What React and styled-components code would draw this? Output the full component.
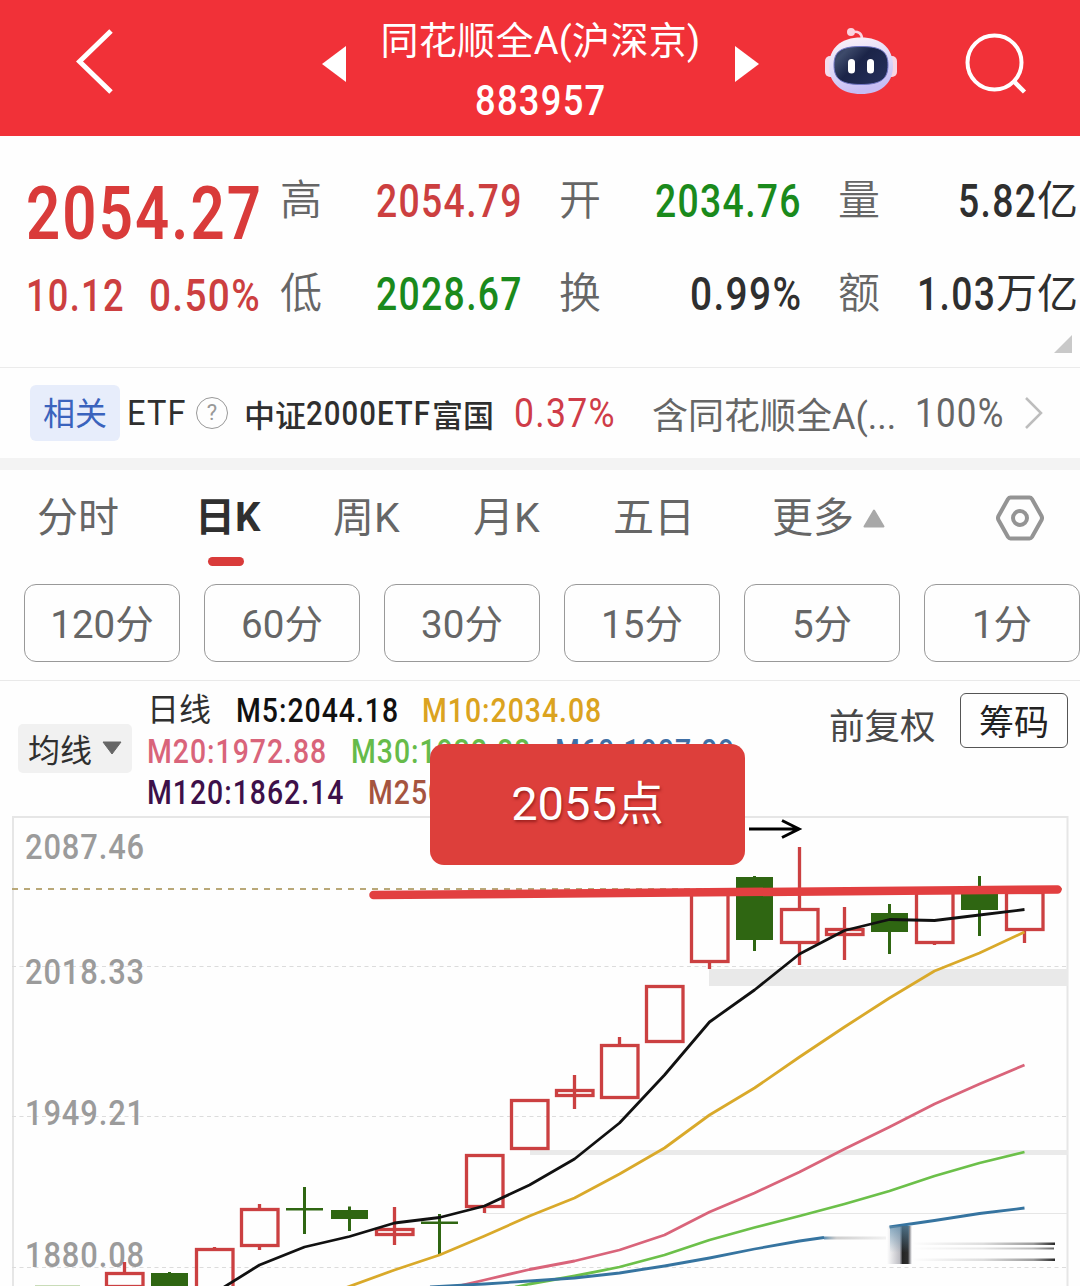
import React from 'react';
import styled, { createGlobalStyle } from 'styled-components';

const RED = '#d93b3a';
const GREEN = '#1a8a1c';
const DARK = '#2f2f2f';
const GREY = '#666';

const stats = [
    { label: '高', value: '2054.79', color: '#cc3f40', width: 145 },
    { label: '开', value: '2034.76', color: GREEN, width: 145 },
    { label: '量', value: '5.82', unit: '亿', color: DARK, width: 79 },
    { label: '低', value: '2028.67', color: GREEN, width: 145 },
    { label: '换', value: '0.99%', color: DARK, width: 110 },
    { label: '额', value: '1.03', unit: '万亿', color: DARK, width: 79 },
];

const periods = ['120分', '60分', '30分', '15分', '5分', '1分'];

const legend = [
    [
        { text: 'M5:2044.18', color: '#111', width: 162 },
        { text: 'M10:2034.08', color: '#dba320', width: 180 },
    ],
    [
        { text: 'M20:1972.88', color: '#d9647a', width: 180 },
        { text: 'M30:1932.88', color: '#66bb4a', width: 180 },
        { text: 'M60:1907.09', color: '#3f6fa5', width: 180 },
    ],
    [
        { text: 'M120:1862.14', color: '#3d1049', width: 197 },
        { text: 'M250', color: '#a5543f', width: 80 },
    ],
];

// x is the middle of the candle, top/bottom the body, high/low the wick
const candles = [
    { x: 124.5, top: 1272, bottom: 1288, high: 1262, low: 1288, up: true },
    { x: 169.5, top: 1273, bottom: 1292, high: 1272, low: 1292 },
    { x: 214.5, top: 1248, bottom: 1296, high: 1247, low: 1296, up: true },
    { x: 259.5, top: 1208, bottom: 1247, high: 1204, low: 1250, up: true },
    { x: 304.5, top: 1208, bottom: 1210.5, high: 1187, low: 1234 },
    { x: 349.5, top: 1210, bottom: 1219, high: 1206.5, low: 1231 },
    { x: 394.5, top: 1228, bottom: 1236, high: 1207, low: 1245, up: true },
    { x: 439.5, top: 1221.5, bottom: 1224, high: 1214, low: 1254 },
    { x: 484.5, top: 1154, bottom: 1208, high: 1154, low: 1213, up: true },
    { x: 529.5, top: 1099, bottom: 1150, high: 1099, low: 1150, up: true },
    { x: 574.5, top: 1089, bottom: 1097, high: 1075, low: 1109, up: true },
    { x: 619.5, top: 1044, bottom: 1099, high: 1037, low: 1099, up: true },
    { x: 664.5, top: 985, bottom: 1043, high: 985, low: 1043, up: true },
    { x: 709.5, top: 892, bottom: 963, high: 892, low: 969, up: true },
    { x: 754.5, top: 877, bottom: 940, high: 876, low: 951 },
    { x: 799.5, top: 908, bottom: 944, high: 847, low: 965, up: true },
    { x: 844.5, top: 928, bottom: 936, high: 907, low: 960, up: true },
    { x: 889.5, top: 913, bottom: 932, high: 904, low: 954 },
    { x: 934.5, top: 891, bottom: 944, high: 891, low: 945, up: true },
    { x: 979.5, top: 891, bottom: 910, high: 876, low: 936 },
    { x: 1024.5, top: 891, bottom: 931, high: 891, low: 943, up: true },
];

const averages = [
    {
        color: '#d9647a',
        points: '450,1288 484.5,1280 529.5,1269.5 574.5,1261 619.5,1250 664.5,1235 709.5,1212 754.5,1193 799.5,1172 844.5,1149 889.5,1127 934.5,1104 979.5,1084 1024.5,1065',
    },
    {
        color: '#6cc04a',
        points: '515,1287 529.5,1284 574.5,1276 619.5,1267 664.5,1255 709.5,1240 754.5,1227.5 799.5,1216 844.5,1204 889.5,1191 934.5,1176 979.5,1163 1024.5,1152',
    },
    {
        color: '#3674a0',
        points: '430,1287 484.5,1284 529.5,1281 574.5,1278 619.5,1273 664.5,1266 709.5,1258 754.5,1249 799.5,1241 824,1237.5',
    },
    { color: '#3674a0', points: '889.5,1227 934.5,1220.5 979.5,1213.5 1024.5,1208' },
    {
        color: '#d9a92a',
        points: '345,1288 394.5,1270 439.5,1255 484.5,1236 529.5,1216 574.5,1198 619.5,1174 664.5,1148 709.5,1115 754.5,1088 799.5,1057 844.5,1027 889.5,998 934.5,971 979.5,953 1024.5,932',
    },
    {
        color: '#111',
        points: '214.5,1293 259.5,1265 304.5,1247 349.5,1236.5 394.5,1223 439.5,1217.5 484.5,1206 529.5,1185 574.5,1159 619.5,1123 664.5,1075 709.5,1022 754.5,990 799.5,954 844.5,930.5 889.5,919.5 934.5,920.5 979.5,915 1024.5,909.5',
    },
];

const axis = [
    { text: '2087.46', x: 25, y: 859, width: 120 },
    { text: '2018.33', x: 25, y: 984, width: 120 },
    { text: '1949.21', x: 25, y: 1125, width: 120 },
    { text: '1880.08', x: 25, y: 1267, width: 120 },
];

function Candle({ x, top, bottom, high, low, up }) {
    if (!up) {
        return (
            <g fill='#2f6612'>
                <rect x={x - 1.5} y={high} width='3' height={low - high} />
                <rect x={x - 18.5} y={top} width='37' height={bottom - top} />
            </g>
        );
    }
    return (
        <g stroke='#cb4041' strokeWidth='3.300' fill='none'>
            <path d={`M${x} ${high}V${top + 1}M${x} ${bottom - 1}V${low}`} />
            {bottom - top < 12 && <path d={`M${x} ${top}V${bottom}`} />}
            <rect x={x - 18} y={top + 1.5} width='36.5' height={bottom - top - 3} />
        </g>
    );
}

function Robot() {
    return (
        <svg width='72' height='68' viewBox='825 27 72 68'>
            <defs>
                <linearGradient id='shell' x1='0' y1='0' x2='0.3' y2='1'>
                    <stop offset='0' stopColor='#fff4f7' />
                    <stop offset='0.55' stopColor='#e0daf8' />
                    <stop offset='1' stopColor='#c6bdf4' />
                </linearGradient>
                <linearGradient id='visor' x1='0' y1='0' x2='1' y2='0.7'>
                    <stop offset='0' stopColor='#273257' />
                    <stop offset='0.2' stopColor='#3e4b6b' />
                    <stop offset='0.5' stopColor='#1b2448' />
                    <stop offset='1' stopColor='#242e58' />
                </linearGradient>
            </defs>
            <path d='M852 32C858 31 862 33 862 39' fill='none' stroke='#fbd3df' strokeWidth='2.6' />
            <circle cx='851' cy='32' r='4' fill='#fbd3df' />
            <rect x='825' y='56' width='13' height='21' rx='5' fill='#f5dcec' />
            <rect x='884' y='56' width='13' height='21' rx='5' fill='#f8d5e3' />
            <path d='M861 37.500C881 37.500 893 48 893 66C893 84 880 94 861 94C842 94 829 84 829 66C829 48 841 37.500 861 37.500Z' fill='url(#shell)' />
            <path d='M861 46.500C882 46.500 888 52 888 65C888 79 881 84.500 861 84.500C841 84.500 834 79 834 65C834 52 840 46.500 861 46.500Z' fill='url(#visor)' stroke='#7277c6' strokeWidth='1' />
            <rect x='848' y='59' width='7' height='14.500' rx='3.500' fill='#fff' />
            <rect x='867' y='59' width='7' height='14.500' rx='3.500' fill='#fff' />
        </svg>
    );
}

function Chart() {
    return (
        <ChartSvg viewBox='0 816 1080 470'>
            <defs>
                <linearGradient id='streak' x1='0' x2='1' y1='0' y2='0'>
                    <stop offset='0' stopColor='#222' stopOpacity='0' />
                    <stop offset='0.5' stopColor='#222' stopOpacity='0.15' />
                    <stop offset='0.85' stopColor='#222' stopOpacity='0.45' />
                    <stop offset='1' stopColor='#111' stopOpacity='0.9' />
                </linearGradient>
                <linearGradient id='tail' x1='0' x2='1' y1='0' y2='0'>
                    <stop offset='0' stopColor='#3674a0' stopOpacity='0.8' />
                    <stop offset='0.2' stopColor='#888' stopOpacity='0.4' />
                    <stop offset='1' stopColor='#888' stopOpacity='0.1' />
                </linearGradient>
                <linearGradient id='block' x1='0' x2='1' y1='0' y2='0'>
                    <stop offset='0' stopColor='#445' stopOpacity='0' />
                    <stop offset='0.5' stopColor='#445' stopOpacity='0.35' />
                    <stop offset='0.62' stopColor='#181818' stopOpacity='0.95' />
                    <stop offset='0.84' stopColor='#181818' stopOpacity='0.9' />
                    <stop offset='1' stopColor='#445' stopOpacity='0' />
                </linearGradient>
                <linearGradient id='blockTop' x1='0' x2='0' y1='0' y2='1'>
                    <stop offset='0' stopColor='#5b8cac' stopOpacity='0.7' />
                    <stop offset='0.7' stopColor='#5b8cac' stopOpacity='0' />
                </linearGradient>
            </defs>
            <path d='M13 1286V817H1067.500V1286' fill='none' stroke='#e6e6e6' strokeWidth='2' />
            <path d='M12 966.500H1068M12 1116.500H1068M12 1267.500H1068' stroke='#dcdcdc' strokeWidth='1' strokeDasharray='4 3.500' />
            <path d='M484 1213.500H1068' stroke='#e6e6e6' strokeWidth='1' />
            <rect x='709' y='969' width='359' height='17' fill='#e9e9e9' />
            <rect x='530' y='1150' width='538' height='5' fill='#eaeaea' />
            <path d='M12 889H1067' stroke='#b9a878' strokeWidth='2' strokeDasharray='6 6' />
            {axis.map((a) => (
                <AxisText key={a.text} x={a.x} y={a.y} textLength={a.width} lengthAdjust='spacingAndGlyphs'>
                    {a.text}
                </AxisText>
            ))}
            {candles.map((c) => (
                <Candle key={c.x} {...c} />
            ))}
            <path d='M35 1285.500H80' stroke='#c9dcb8' strokeWidth='1' />
            {averages.map((m) => (
                <polyline key={m.points} points={m.points} fill='none' stroke={m.color} strokeWidth='2.800' strokeLinejoin='round' />
            ))}
            <rect x='824' y='1236.500' width='62' height='3' fill='url(#tail)' />
            <rect x='887' y='1226' width='25' height='38' fill='url(#block)' />
            <rect x='890' y='1226' width='19' height='38' fill='url(#blockTop)' />
            <rect x='912' y='1242.500' width='143' height='2.500' fill='url(#streak)' />
            <rect x='912' y='1247.500' width='142' height='2' fill='url(#streak)' opacity='0.7' />
            <rect x='912' y='1258.500' width='143' height='2.500' fill='url(#streak)' />
            <path d='M373.500 895L1057.500 889.500' stroke='#e23f40' strokeWidth='8.500' strokeLinecap='round' />
            <path d='M749 829H799M782 820.500L799 829L782 837.500' fill='none' stroke='#000' strokeWidth='3' />
        </ChartSvg>
    );
}

function App() {
    return (
        <Page>
            <GlobalStyle />
            <Header>
                <Back>
                    <svg width='38' height='68' viewBox='76 28 38 68'>
                        <path d='M111 31L79.500 61.500L111 92' fill='none' stroke='#fff' strokeWidth='5' />
                    </svg>
                </Back>
                <TitleGroup>
                    <svg width='24' height='36' viewBox='0 0 24 36'>
                        <path d='M0 18L24 0V36Z' fill='#fff' />
                    </svg>
                    <Title>
                        <Name>同花顺全A(沪深京)</Name>
                        <Code>
                            <Num $size={42} $width={131} $k={0.865} $weight={500}>883957</Num>
                        </Code>
                    </Title>
                    <svg width='24' height='36' viewBox='0 0 24 36'>
                        <path d='M24 18L0 0V36Z' fill='#fff' />
                    </svg>
                </TitleGroup>
                <Tools>
                    <Robot />
                    <svg width='62' height='62' viewBox='965 33 62 62'>
                        <circle cx='994.500' cy='62.500' r='27' fill='none' stroke='#fff' strokeWidth='4' />
                        <path d='M1013.500 81L1024.500 92' stroke='#fff' strokeWidth='4.500' />
                    </svg>
                </Tools>
            </Header>

            <Quote>
                <Price>
                    <Num $size={74} $width={232} $k={0.81} $weight={600}>2054.27</Num>
                    <Change>
                        <Num $size={45} $width={99} $k={0.805} $weight={500}>10.12</Num>
                        <Num $size={45} $width={110} $k={0.86} $weight={500}>0.50%</Num>
                    </Change>
                </Price>
                <Stats>
                    {stats.map((s) => (
                        <Stat key={s.label} $color={s.color}>
                            <label>{s.label}</label>
                            <Num $size={46} $width={s.width} $k={s.value.includes('%') ? 0.845 : 0.812} $weight={500}>{s.value}</Num>
                            {s.unit && <Unit>{s.unit}</Unit>}
                        </Stat>
                    ))}
                </Stats>
                <Corner />
            </Quote>

            <Related>
                <Chip>相关</Chip>
                <Etf>
                    <Num $size={35} $width={60} $k={0.93}>ETF</Num>
                </Etf>
                <Help>?</Help>
                <Fund>
                    中证
                    <Num $size={33} $width={126} $k={0.89} $weight={500}>2000ETF</Num>
                    富国
                </Fund>
                <Rise>
                    <Num $size={40} $width={102} $k={0.89}>0.37%</Num>
                </Rise>
                <Holding>含同花顺全A(...</Holding>
                <Num $size={40} $width={90} $k={0.875}>100%</Num>
                <svg width='20' height='34' viewBox='0 0 20 34'>
                    <path d='M2 2L17 17L2 32' fill='none' stroke='#bdbdbd' strokeWidth='2.500' />
                </svg>
            </Related>

            <Tabs>
                <Tab>分时</Tab>
                <Tab $active>日K</Tab>
                <Tab>周K</Tab>
                <Tab>月K</Tab>
                <Tab>五日</Tab>
                <Tab>
                    更多
                    <svg width='22' height='19' viewBox='0 0 22 19'>
                        <path d='M11 1.500L20.500 17.500H1.500Z' fill='#a8a8a8' stroke='#a8a8a8' strokeWidth='2' strokeLinejoin='round' />
                    </svg>
                </Tab>
                <svg width='48' height='46' viewBox='0 0 48 46'>
                    <path d='M14.500 2.500H33.500Q35 2.500 36 4L45.500 21Q46.500 23 45.500 25L36 42Q35 43.500 33.500 43.500H14.500Q13 43.500 12 42L2.500 25Q1.500 23 2.500 21L12 4Q13 2.500 14.500 2.500Z' fill='none' stroke='#949494' strokeWidth='4' />
                    <circle cx='24' cy='23' r='7' fill='none' stroke='#949494' strokeWidth='4' />
                </svg>
            </Tabs>

            <Periods>
                {periods.map((p) => (
                    <Period key={p}>{p}</Period>
                ))}
            </Periods>

            <ChartArea>
                <ChartHead>
                    <MaSelect>
                        均线
                        <svg width='20' height='14' viewBox='0 0 20 14'>
                            <path d='M1 1H19L10 13Z' fill='#666' stroke='#666' strokeLinejoin='round' />
                        </svg>
                    </MaSelect>
                    <Legend>
                        {legend.map((row, i) => (
                            <LegendRow key={row[0].text}>
                                {i === 0 && <DayLine>日线</DayLine>}
                                {row.map((m) => (
                                    <Num key={m.text} $size={33} $width={m.width} $k={0.86} $weight={500} $color={m.color}>{m.text}</Num>
                                ))}
                            </LegendRow>
                        ))}
                    </Legend>
                    <Adjust>前复权</Adjust>
                    <ChipsButton>筹码</ChipsButton>
                </ChartHead>
                <Chart />
                <Callout>2055点</Callout>
            </ChartArea>
        </Page>
    );
}

const GlobalStyle = createGlobalStyle`
    body {
        margin: 0;
        background: #fff;
        overflow: hidden;
    }
    svg {
        display: block;
        flex: none;
    }
`;

const Page = styled.div`
    width: 1080px;
    height: 1286px;
    overflow: hidden;
    background: #fefefe;
    font-family: Roboto, 'Noto Sans CJK SC', sans-serif;
    color: ${DARK};
    white-space: nowrap;
`;

/* narrow figures: the box takes the final width, the glyphs are squeezed into it */
const Num = styled.span`
    display: block;
    flex: none;
    width: ${(p) => p.$width}px;
    font-size: ${(p) => p.$size}px;
    font-weight: ${(p) => p.$weight || 400};
    letter-spacing: 0.035em;
    color: ${(p) => p.$color || 'inherit'};
    transform: scaleX(${(p) => p.$k});
    transform-origin: left;
`;

const Header = styled.header`
    display: grid;
    grid-template-columns: 322px 437px 321px;
    height: 136px;
    background: #f13138;
    color: #fff;
`;

const Back = styled.div`
    padding: 28px 0 0 76px;
`;

const TitleGroup = styled.div`
    display: flex;
    justify-content: space-between;
    & > svg {
        margin-top: 46px;
    }
`;

const Title = styled.div`
    display: flex;
    flex-direction: column;
    align-items: center;
    padding-top: 11px;
    line-height: 60px;
`;

const Name = styled.div`
    font-size: 38px;
    letter-spacing: 0.3px;
`;

const Code = styled.div`
    display: flex;
`;

const Tools = styled.div`
    display: flex;
    gap: 68px;
    padding: 27px 0 0 66px;
    & > svg:last-child {
        margin-top: 6px;
    }
`;

const Quote = styled.section`
    position: relative;
    display: flex;
    box-sizing: border-box;
    height: 232px;
    padding-top: 18px;
    border-bottom: 1px solid #ebebeb;
`;

const Price = styled.div`
    box-sizing: border-box;
    width: 280px;
    padding: 13px 0 0 26px;
    line-height: 94px;
    color: ${RED};
`;

const Change = styled.div`
    display: flex;
    gap: 24px;
    margin-top: -12px;
    color: #cc3f40;
`;

const Stats = styled.div`
    display: grid;
    grid-template-columns: repeat(3, 241px);
    grid-auto-rows: 93px;
    column-gap: 38px;
`;

const Stat = styled.div`
    display: flex;
    align-items: center;
    line-height: 94px;
    color: ${(p) => p.$color};
    label {
        flex: 1;
        font-size: 42px;
        font-weight: 350;
        color: ${GREY};
    }
`;

const Unit = styled.span`
    margin-right: 1px;
    font-size: 41px;
`;

const Corner = styled.i`
    position: absolute;
    right: 8px;
    bottom: 14px;
    border-style: solid;
    border-width: 0 0 18px 18px;
    border-color: transparent transparent #c9c9c9 transparent;
`;

const Related = styled.section`
    display: flex;
    align-items: center;
    height: 90px;
    padding-left: 30px;
    border-bottom: 12px solid #f3f3f3;
    & > svg {
        margin-left: 19px;
    }
    & > span:nth-last-child(2) {
        color: ${GREY};
    }
`;

const Chip = styled.div`
    width: 90px;
    height: 56px;
    line-height: 58px;
    margin-right: 7px;
    border-radius: 6px;
    background: #e7edfb;
    color: #3a63bd;
    font-size: 32px;
    text-align: center;
`;

const Etf = styled.div`
    width: 69px;
`;

const Help = styled.div`
    box-sizing: border-box;
    width: 32px;
    height: 32px;
    border: 1.5px solid #999;
    border-radius: 50%;
    color: #999;
    font-size: 22px;
    line-height: 30px;
    text-align: center;
`;

const Fund = styled.div`
    display: flex;
    align-items: center;
    width: 270px;
    margin-left: 16px;
    font-size: 31px;
    font-weight: 500;
`;

const Rise = styled.div`
    width: 138px;
    color: #cf3c48;
`;

const Holding = styled.div`
    width: 263px;
    font-size: 36px;
    color: ${GREY};
`;

const Tabs = styled.nav`
    display: grid;
    grid-template-columns: 158px 138px 140px 140px 159px 224px 48px;
    align-items: center;
    height: 96px;
    margin-bottom: 4px;
    padding-left: 37px;
`;

const Tab = styled.div`
    position: relative;
    display: flex;
    align-items: center;
    gap: 9px;
    line-height: 60px;
    font-size: ${(p) => (p.$active ? 40 : 41)}px;
    font-weight: ${(p) => (p.$active ? 700 : 400)};
    color: ${(p) => (p.$active ? DARK : GREY)};
    &::after {
        content: '';
        display: ${(p) => (p.$active ? 'block' : 'none')};
        position: absolute;
        left: 13px;
        bottom: -18px;
        width: 36px;
        height: 9px;
        border-radius: 5px;
        background: ${RED};
    }
`;

const Periods = styled.div`
    display: grid;
    grid-template-columns: repeat(6, 156px);
    column-gap: 24px;
    height: 96px;
    padding: 14px 0 0 24px;
    border-bottom: 1px solid #e9e9e9;
`;

const Period = styled.div`
    box-sizing: border-box;
    height: 78px;
    border: 1px solid #999;
    border-radius: 12px;
    font-size: 38.5px;
    line-height: 80px;
    text-align: center;
    color: ${GREY};
`;

const ChartArea = styled.section`
    position: relative;
`;

const ChartHead = styled.div`
    display: flex;
    height: 135px;
`;

const MaSelect = styled.div`
    display: flex;
    align-items: center;
    gap: 10px;
    box-sizing: border-box;
    width: 114px;
    height: 49px;
    margin: 43px 15px 0 18px;
    padding: 0 0 2px 10px;
    border-radius: 5px;
    background: #f1f1f1;
    font-size: 32px;
`;

const Legend = styled.div`
    width: 682px;
    padding-top: 9px;
    line-height: 41px;
`;

const LegendRow = styled.div`
    display: flex;
    gap: 24px;
`;

const DayLine = styled.div`
    width: 65px;
    font-size: 32px;
`;

const Adjust = styled.div`
    width: 131px;
    font-size: 35.5px;
    line-height: 93px;
    color: #484848;
`;

const ChipsButton = styled.button`
    width: 108px;
    height: 55px;
    margin-top: 12px;
    padding: 5px 0 0;
    border: 1px solid #555;
    border-radius: 6px;
    background: none;
    color: #222;
    font: 400 35px/50px Roboto, 'Noto Sans CJK SC', sans-serif;
`;

const ChartSvg = styled.svg`
    width: 1080px;
    height: 470px;
`;

const AxisText = styled.text`
    font-size: 35px;
    font-weight: 500;
    letter-spacing: 1px;
    fill: #9b9b9b;
`;

const Callout = styled.div`
    position: absolute;
    left: 430px;
    top: 63px;
    width: 315px;
    height: 121px;
    border-radius: 14px;
    background: #dd3f3b;
    color: #fff;
    font-size: 47px;
    line-height: 120px;
    text-align: center;
    text-shadow: 1px 2px 3px rgba(90, 0, 0, 0.5);
`;

export default App;
